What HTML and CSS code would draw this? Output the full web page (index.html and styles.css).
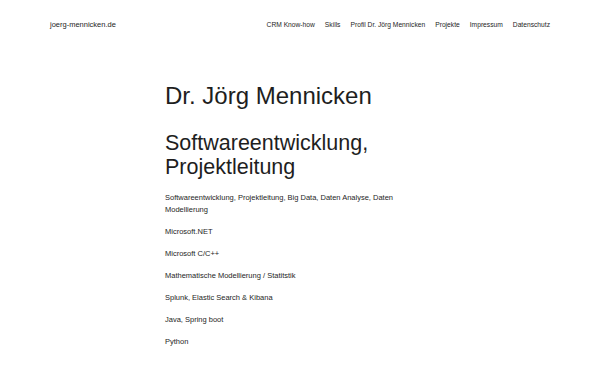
FILE: index.html
```html
<!DOCTYPE html>
<html lang="de">
<head>
    <meta charset="UTF-8">
    <title>Dr. Jörg Mennicken</title>
    <link rel="stylesheet" href="styles.css">
</head>
<body>
<header class="site-header">
    <a class="site-title" href="#">joerg-mennicken.de</a>
    <ul class="nav">
        <li><a href="#">CRM Know-how</a></li>
        <li><a href="#">Skills</a></li>
        <li><a href="#">Profil Dr. Jörg Mennicken</a></li>
        <li><a href="#">Projekte</a></li>
        <li><a href="#">Impressum</a></li>
        <li><a href="#">Datenschutz</a></li>
    </ul>
</header>

<main class="content">
    <h1 class="page-title">Dr. Jörg Mennicken</h1>
    <h2 class="subtitle">Softwareentwicklung, Projektleitung</h2>
    <p>Softwareentwicklung, Projektleitung, Big Data, Daten Analyse, Daten Modellierung</p>
    <p>Microsoft.NET</p>
    <p>Microsoft C/C++</p>
    <p>Mathematische Modellierung / Statitstik</p>
    <p>Splunk, Elastic Search &amp; Kibana</p>
    <p>Java, Spring boot</p>
    <p>Python</p>
</main>
</body>
</html>
```

FILE: styles.css
```css
* {
    padding: 0;
    margin: 0;
    list-style: none;
}

body {
    font-family: "Liberation Sans", Arial, sans-serif;
    color: #1e1e1e;
    background-color: #fff;
}

a {
    color: inherit;
    text-decoration: none;
}

.site-header {
    display: flex;
    justify-content: space-between;
    align-items: center;
    padding: 20px 50px;
    line-height: 10px;
}

.site-title {
    font-size: 7.5px;
}

.nav {
    display: flex;
    gap: 10px;
    font-size: 6.7px;
}

.content {
    width: 270px;
    margin: 0 auto;
    padding-top: 32px;
}

.page-title {
    font-size: 24px;
    font-weight: normal;
    line-height: 28.8px;
    margin-bottom: 20px;
}

.subtitle {
    font-size: 21.5px;
    font-weight: normal;
    line-height: 24px;
    margin-bottom: 13px;
}

.content p {
    font-size: 7.5px;
    line-height: 12px;
    margin-bottom: 10px;
}
```
